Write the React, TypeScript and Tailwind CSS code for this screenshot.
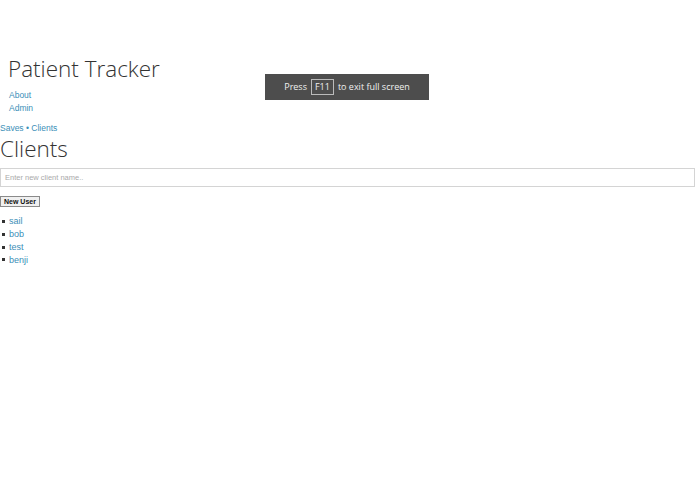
const clients = ["sail", "bob", "test", "benji"];

const App = () => (
  <div className="relative min-h-[494px] bg-white text-[#333] font-['Liberation_Sans',Arial,sans-serif]">
    {/* Header */}
    <header className="pt-[52px] pl-2">
      <h1 className="text-[22.5px] leading-[34px] font-light font-['Open_Sans',sans-serif] text-[#333]">Patient Tracker</h1>
      <ul className="mt-[3px] pl-[1px] text-[8.5px] leading-[12.7px] text-[#3b8fb8]">
        <li><a href="#">About</a></li>
        <li><a href="#">Admin</a></li>
      </ul>
    </header>

    {/* Breadcrumb */}
    <nav className="mt-[8px] text-[8.5px] leading-[12px] text-[#3b8fb8]">
      <a href="#">Saves</a> • <a href="#">Clients</a>
    </nav>

    {/* Clients */}
    <section>
      <h2 className="text-[22.5px] leading-[30px] font-light font-['Open_Sans',sans-serif] text-[#333]">Clients</h2>
      <input
        type="text"
        placeholder="Enter new client name.."
        className="mt-[4px] block w-full h-[19px] border border-[#d4d4d4] px-[4px] text-[7.5px] placeholder:text-[#aaa] outline-none"
      />
      <button className="mt-[9px] block h-[11px] px-[3px] border border-[#8a8a8a] bg-[#f0f0f0] text-[7px] leading-[9px] font-semibold text-[#111]">
        New User
      </button>
      <ul className="mt-[8px] flex flex-col text-[9px] leading-[12.7px] text-[#3b8fb8]">
        {clients.map((c) => (
          <li key={c} className="flex items-center">
            <span className="ml-[2px] mr-[4px] w-[3px] h-[3px] bg-[#333]" />
            <a href="#">{c}</a>
          </li>
        ))}
      </ul>
    </section>

    {/* Fullscreen notice */}
    <div className="absolute left-[265px] top-[74px] w-[164px] h-[26px] bg-[#4d4d4d] flex items-center justify-center gap-[4px] text-[9px] text-[#f0f0f0] font-['Open_Sans',sans-serif]">
      <span>Press</span>
      <span className="border border-[#bbb] px-[3px] leading-[14px]">F11</span>
      <span>to exit full screen</span>
    </div>
  </div>
);

export default App;
